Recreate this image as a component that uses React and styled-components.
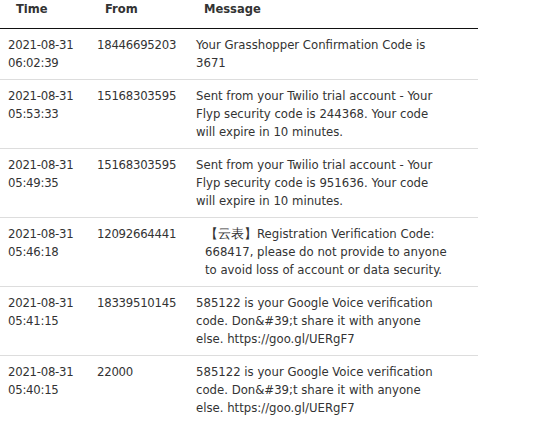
import React from 'react';
import styled, { createGlobalStyle } from 'styled-components';

const GlobalStyle = createGlobalStyle`
  html, body {
    margin: 0;
    padding: 0;
    background: #fff;
  }
  body {
    font-family: "DejaVu Sans Condensed", "DejaVu Sans", Verdana, sans-serif;
    color: #333;
    overflow: hidden;
  }
`;

const Wrap = styled.div`
  width: 478px;
`;

const Table = styled.table`
  width: 478px;
  border-collapse: collapse;
  table-layout: fixed;
  font-size: 13px;
  line-height: 18px;
`;

const HeadCell = styled.th`
  text-align: left;
  font-weight: bold;
  font-size: 12.8px;
  color: #333;
  padding: 0 8px 10px 16px;
  border-bottom: 1px solid #111;
`;

const Row = styled.tr`
  border-bottom: 1px solid ${(p) => (p.$last ? '#111' : '#dddddd')};
`;

const Cell = styled.td`
  vertical-align: top;
  padding: 7px 8px;
  color: #333;
  word-wrap: break-word;
`;

const NumCell = styled(Cell)`
  letter-spacing: -0.25px;
`;

const MsgCell = styled(Cell)`
  padding-left: ${(p) => (p.$indent ? 17 : 8)}px;
`;

const Line = styled.span`
  display: block;
  white-space: nowrap;
  letter-spacing: ${(p) => p.$ls || 0}px;
`;

const Pager = styled.div`
  display: flex;
  height: 2px;
`;

const PagerSeg = styled.div`
  width: ${(p) => p.$w}px;
  background: ${(p) => p.$bg};
  border-right: ${(p) => (p.$tick ? '1px solid #e0a070' : 'none')};
`;

const twilio = (code) => [
  'Sent from your Twilio trial account - Your',
  `Flyp security code is ${code}. Your code`,
  'will expire in 10 minutes.',
];

const google = [
  '585122 is your Google Voice verification',
  'code. Don&#39;t share it with anyone',
  'else. https://goo.gl/UERgF7',
];

const rows = [
  { time: '2021-08-31 06:02:39', from: '18446695203', lines: ['Your Grasshopper Confirmation Code is', '3671'] },
  { time: '2021-08-31 05:53:33', from: '15168303595', lines: twilio('244368') },
  { time: '2021-08-31 05:49:35', from: '15168303595', lines: twilio('951636') },
  {
    time: '2021-08-31 05:46:18',
    from: '12092664441',
    indent: true,
    lines: [
      '【云表】Registration Verification Code:',
      '668417, please do not provide to anyone',
      'to avoid loss of account or data security.',
    ],
  },
  { time: '2021-08-31 05:41:15', from: '18339510145', lines: google },
  { time: '2021-08-31 05:40:15', from: '22000', lines: google },
];

export default function App() {
  return (
    <Wrap>
      <GlobalStyle />
      <Table>
        <colgroup>
          <col style={{ width: 89 }} />
          <col style={{ width: 99 }} />
          <col style={{ width: 290 }} />
        </colgroup>
        <thead>
          <tr>
            <HeadCell>Time</HeadCell>
            <HeadCell>From</HeadCell>
            <HeadCell>Message</HeadCell>
          </tr>
        </thead>
        <tbody>
          {rows.map((r, i) => (
            <Row key={i} $last={i === rows.length - 1}>
              <NumCell>{r.time}</NumCell>
              <NumCell>{r.from}</NumCell>
              <MsgCell $indent={r.indent}>
                {r.lines.map((l, j) => (
                  <Line key={j}>{l}</Line>
                ))}
              </MsgCell>
            </Row>
          ))}
        </tbody>
      </Table>
      <Pager>
        <PagerSeg $w={283} $bg="#f8a466" />
        <PagerSeg $w={21} $bg="#fbd0b0" $tick />
        <PagerSeg $w={16} $bg="#fbd0b0" $tick />
      </Pager>
    </Wrap>
  );
}
